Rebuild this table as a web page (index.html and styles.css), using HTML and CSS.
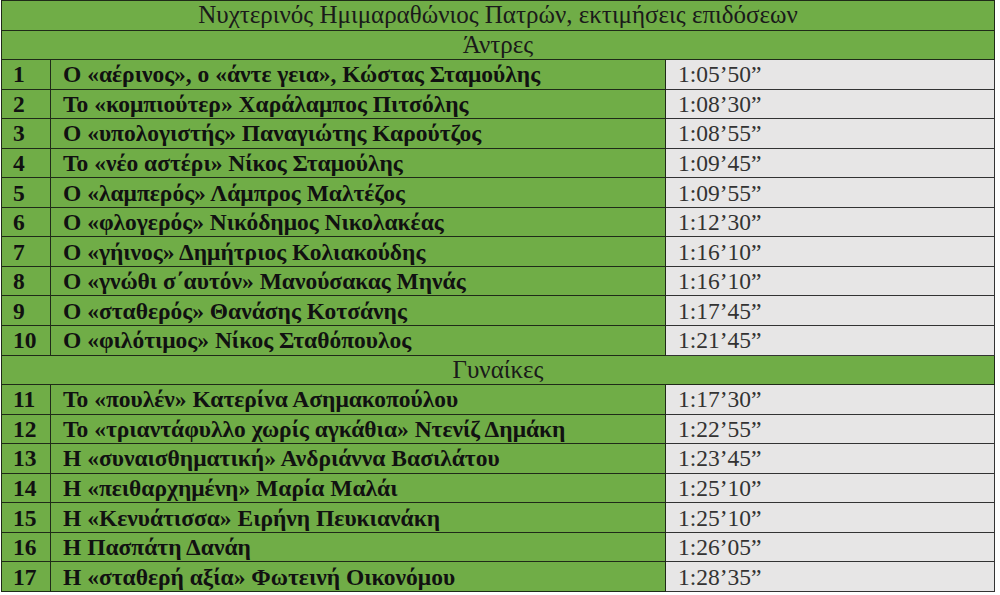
FILE: index.html
```html
<!DOCTYPE html>
<html lang="el">
<head>
<meta charset="utf-8">
<title>Νυχτερινός Ημιμαραθώνιος Πατρών</title>
<link rel="stylesheet" href="styles.css">
</head>
<body>
<table class="results">
  <colgroup>
    <col class="c-num">
    <col class="c-name">
    <col class="c-time">
  </colgroup>
  <tbody>
    <tr class="head"><td colspan="3">Νυχτερινός Ημιμαραθώνιος Πατρών, εκτιμήσεις επιδόσεων</td></tr>
    <tr class="head"><td colspan="3">Άντρες</td></tr>
    <tr><td class="num">1</td><td class="name">Ο «αέρινος», ο «άντε γεια», Κώστας Σταμούλης</td><td class="time">1:05’50”</td></tr>
    <tr><td class="num">2</td><td class="name">Το «κομπιούτερ» Χαράλαμπος Πιτσόλης</td><td class="time">1:08’30”</td></tr>
    <tr><td class="num">3</td><td class="name">Ο «υπολογιστής» Παναγιώτης Καρούτζος</td><td class="time">1:08’55”</td></tr>
    <tr><td class="num">4</td><td class="name">Το «νέο αστέρι» Νίκος Σταμούλης</td><td class="time">1:09’45”</td></tr>
    <tr><td class="num">5</td><td class="name">Ο «λαμπερός» Λάμπρος Μαλτέζος</td><td class="time">1:09’55”</td></tr>
    <tr><td class="num">6</td><td class="name">Ο «φλογερός» Νικόδημος Νικολακέας</td><td class="time">1:12’30”</td></tr>
    <tr><td class="num">7</td><td class="name">Ο «γήινος» Δημήτριος Κολιακούδης</td><td class="time">1:16’10”</td></tr>
    <tr><td class="num">8</td><td class="name">Ο «γνώθι σ΄αυτόν» Μανούσακας Μηνάς</td><td class="time">1:16’10”</td></tr>
    <tr><td class="num">9</td><td class="name">Ο «σταθερός» Θανάσης Κοτσάνης</td><td class="time">1:17’45”</td></tr>
    <tr><td class="num">10</td><td class="name">Ο «φιλότιμος» Νίκος Σταθόπουλος</td><td class="time">1:21’45”</td></tr>
    <tr class="head"><td colspan="3">Γυναίκες</td></tr>
    <tr><td class="num">11</td><td class="name">Το «πουλέν» Κατερίνα Ασημακοπούλου</td><td class="time">1:17’30”</td></tr>
    <tr><td class="num">12</td><td class="name">Το «τριαντάφυλλο χωρίς αγκάθια» Ντενίζ Δημάκη</td><td class="time">1:22’55”</td></tr>
    <tr><td class="num">13</td><td class="name">Η «συναισθηματική» Ανδριάννα Βασιλάτου</td><td class="time">1:23’45”</td></tr>
    <tr><td class="num">14</td><td class="name">Η «πειθαρχημένη» Μαρία Μαλάι</td><td class="time">1:25’10”</td></tr>
    <tr><td class="num">15</td><td class="name">Η «Κενυάτισσα» Ειρήνη Πευκιανάκη</td><td class="time">1:25’10”</td></tr>
    <tr><td class="num">16</td><td class="name">Η Πασπάτη Δανάη</td><td class="time">1:26’05”</td></tr>
    <tr><td class="num">17</td><td class="name">Η «σταθερή αξία» Φωτεινή Οικονόμου</td><td class="time">1:28’35”</td></tr>
  </tbody>
</table>
</body>
</html>
```

FILE: styles.css
```css
html, body {
  margin: 0;
  padding: 0;
  background: #ffffff;
}

body {
  padding: 0 0 0 1px;
  font-family: "Liberation Serif", "DejaVu Serif", serif;
  font-size: 23.5px;
  color: #111;
}

.results {
  border-collapse: collapse;
  table-layout: fixed;
  width: 993px;
}

.c-num { width: 49px; }
.c-name { width: 615px; }
.c-time { width: 329px; }

.results td {
  border: 1.5px solid #1f2a18;
  height: 28.55px;
  padding: 0 0 0 11px;
  line-height: 26px;
  white-space: nowrap;
  overflow: hidden;
  background: #70ad47;
}

.results tr.head td {
  text-align: center;
  padding: 0;
  font-size: 25px;
  font-weight: normal;
  color: #1a1a1a;
}

.results td.num {
  font-weight: bold;
  padding-left: 11px;
}

.results td.name {
  font-weight: bold;
  padding-left: 12px;
}

.results td.time {
  background: #e7e6e6;
  color: #333;
  padding-left: 12px;
  border-color: #333;
}
```
